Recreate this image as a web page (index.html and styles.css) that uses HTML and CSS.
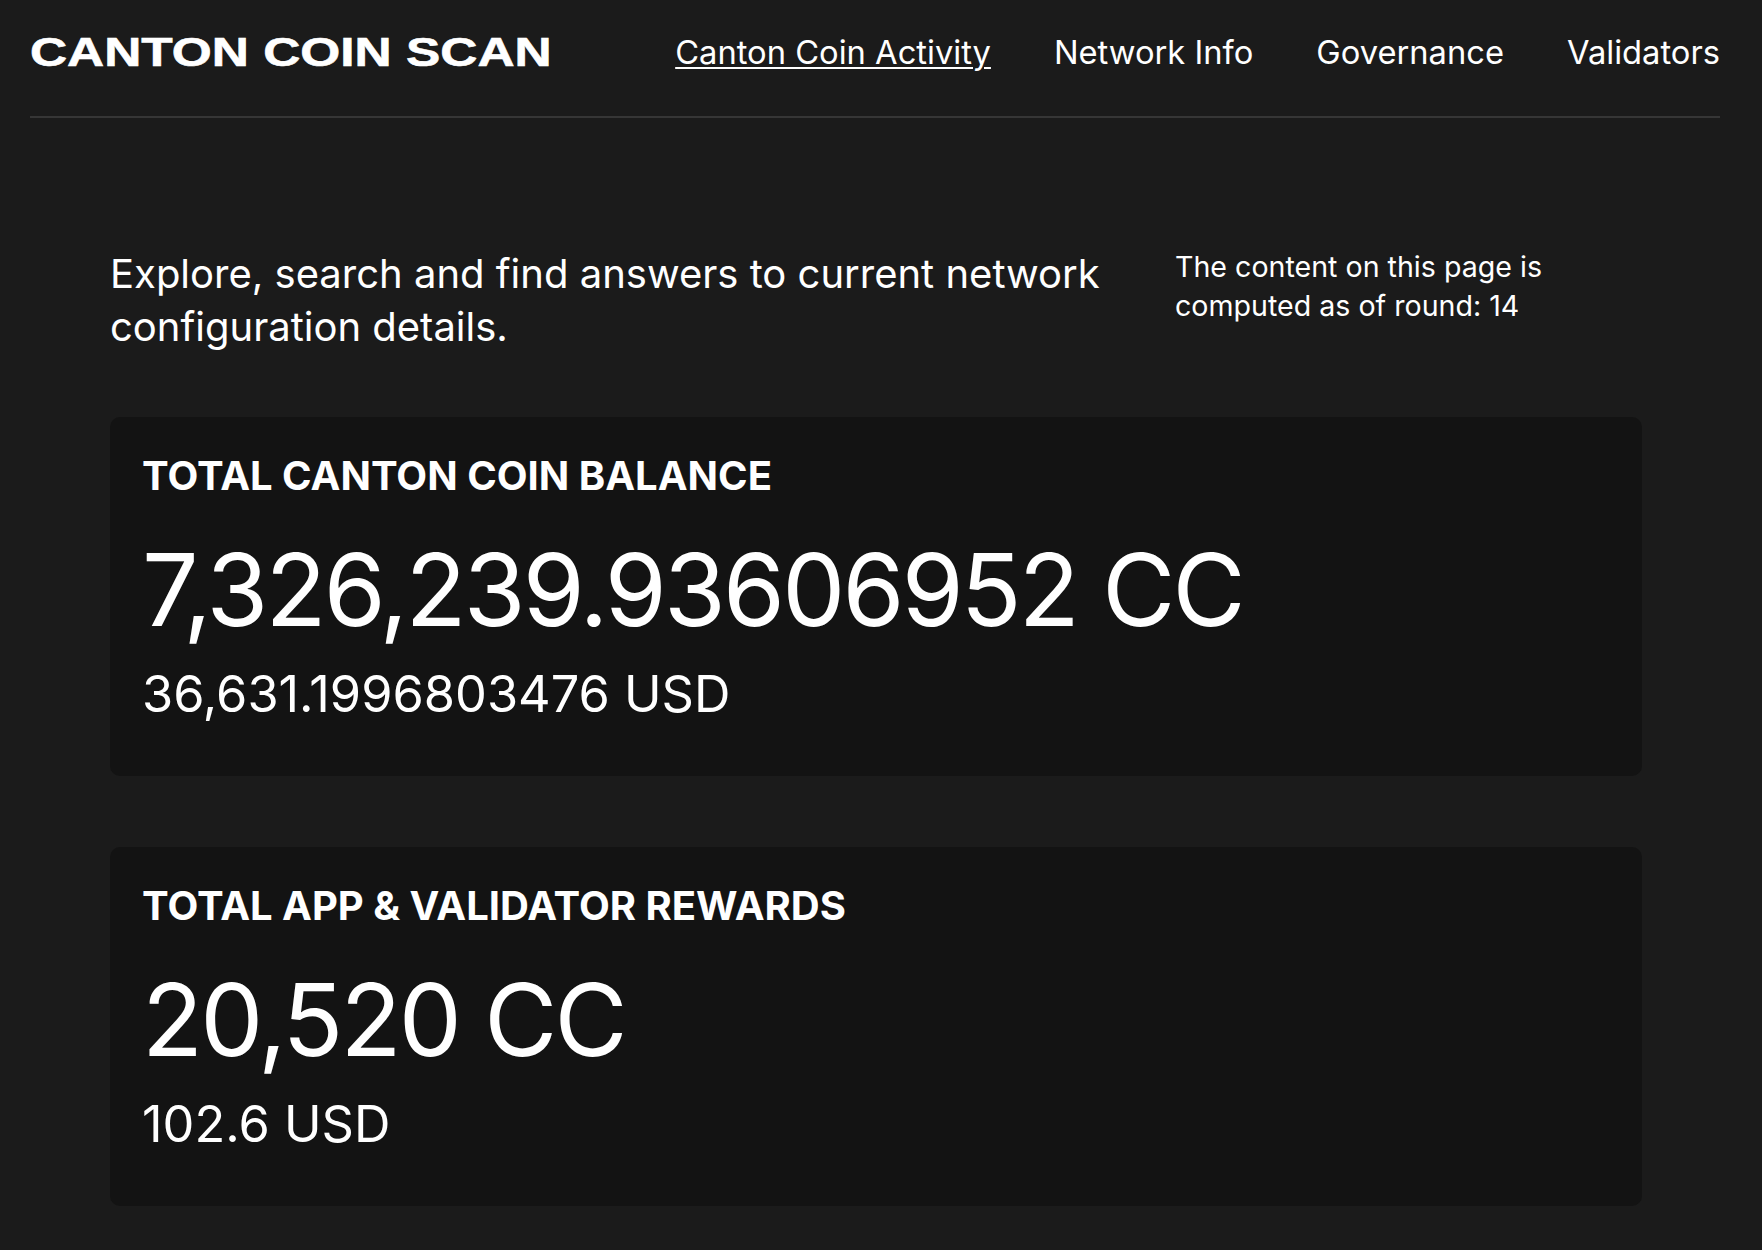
FILE: index.html
```html
<!DOCTYPE html>
<html lang="en">
<head>
<meta charset="utf-8">
<title>Canton Coin Scan</title>
<link rel="stylesheet" href="styles.css">
</head>
<body>
<header class="topbar">
  <div class="logo"><span class="logo-text">CANTON COIN SCAN</span></div>
  <nav class="nav">
    <a class="nav-link active" href="#">Canton Coin Activity</a>
    <a class="nav-link" href="#">Network Info</a>
    <a class="nav-link" href="#">Governance</a>
    <a class="nav-link" href="#">Validators</a>
  </nav>
</header>
<main class="main">
  <section class="intro">
    <p class="intro-text">Explore, search and find answers to current network configuration details.</p>
    <p class="round-text">The content on this page is computed as of round: 14</p>
  </section>
  <section class="card">
    <h2 class="card-label">TOTAL CANTON COIN BALANCE</h2>
    <div class="card-value">7,326,239.93606952 CC</div>
    <div class="card-sub">36,631.1996803476 USD</div>
  </section>
  <section class="card">
    <h2 class="card-label">TOTAL APP &amp; VALIDATOR REWARDS</h2>
    <div class="card-value">20,520 CC</div>
    <div class="card-sub">102.6 USD</div>
  </section>
</main>
</body>
</html>
```
FILE: styles.css
```css
html, body {
  margin: 0;
  padding: 0;
  background: #1b1b1b;
  color: #ffffff;
  font-family: Inter, "Noto Sans", "Liberation Sans", sans-serif;
}

.topbar {
  display: flex;
  align-items: center;
  justify-content: space-between;
  margin: 0 42px 0 30px;
  padding: 30px 0 41px;
  border-bottom: 2px solid #363636;
}

.logo {
  font-family: "Liberation Sans", Arial, sans-serif;
  font-weight: 700;
  font-size: 40px;
  line-height: 45px;
  white-space: nowrap;
}

.logo-text {
  display: inline-block;
  transform: scaleX(1.285);
  transform-origin: left center;
  -webkit-text-stroke: 0.6px #ffffff;
}

.nav {
  display: flex;
  gap: 63px;
}

.nav-link {
  color: #ffffff;
  text-decoration: none;
  font-size: 32.7px;
  line-height: 39px;
  white-space: nowrap;
}

.nav-link.active {
  text-decoration: underline;
  text-decoration-thickness: 2px;
  text-underline-offset: 3px;
}

.main {
  padding: 129px 120px 0 110px;
}

.intro {
  display: grid;
  grid-template-columns: 1000px 1fr;
  column-gap: 65px;
  margin-bottom: 64px;
}

.intro-text {
  margin: 0;
  font-size: 40px;
  line-height: 53px;
}

.round-text {
  margin: 0;
  font-size: 28.6px;
  line-height: 39px;
  max-width: 400px;
}

.card {
  background: #131313;
  border-radius: 10px;
  padding: 36px 32px 53px;
  margin-bottom: 71px;
}

.card:last-child {
  margin-bottom: 0;
}

.card-label {
  margin: 0 0 30px;
  font-size: 40px;
  line-height: 46px;
  font-weight: 700;
}

.card-value {
  font-size: 100px;
  line-height: 121px;
  font-weight: 400;
  letter-spacing: -2.8px;
  margin-bottom: 15px;
}

.card-sub {
  font-size: 50.5px;
  line-height: 58px;
  font-weight: 400;
}
```
